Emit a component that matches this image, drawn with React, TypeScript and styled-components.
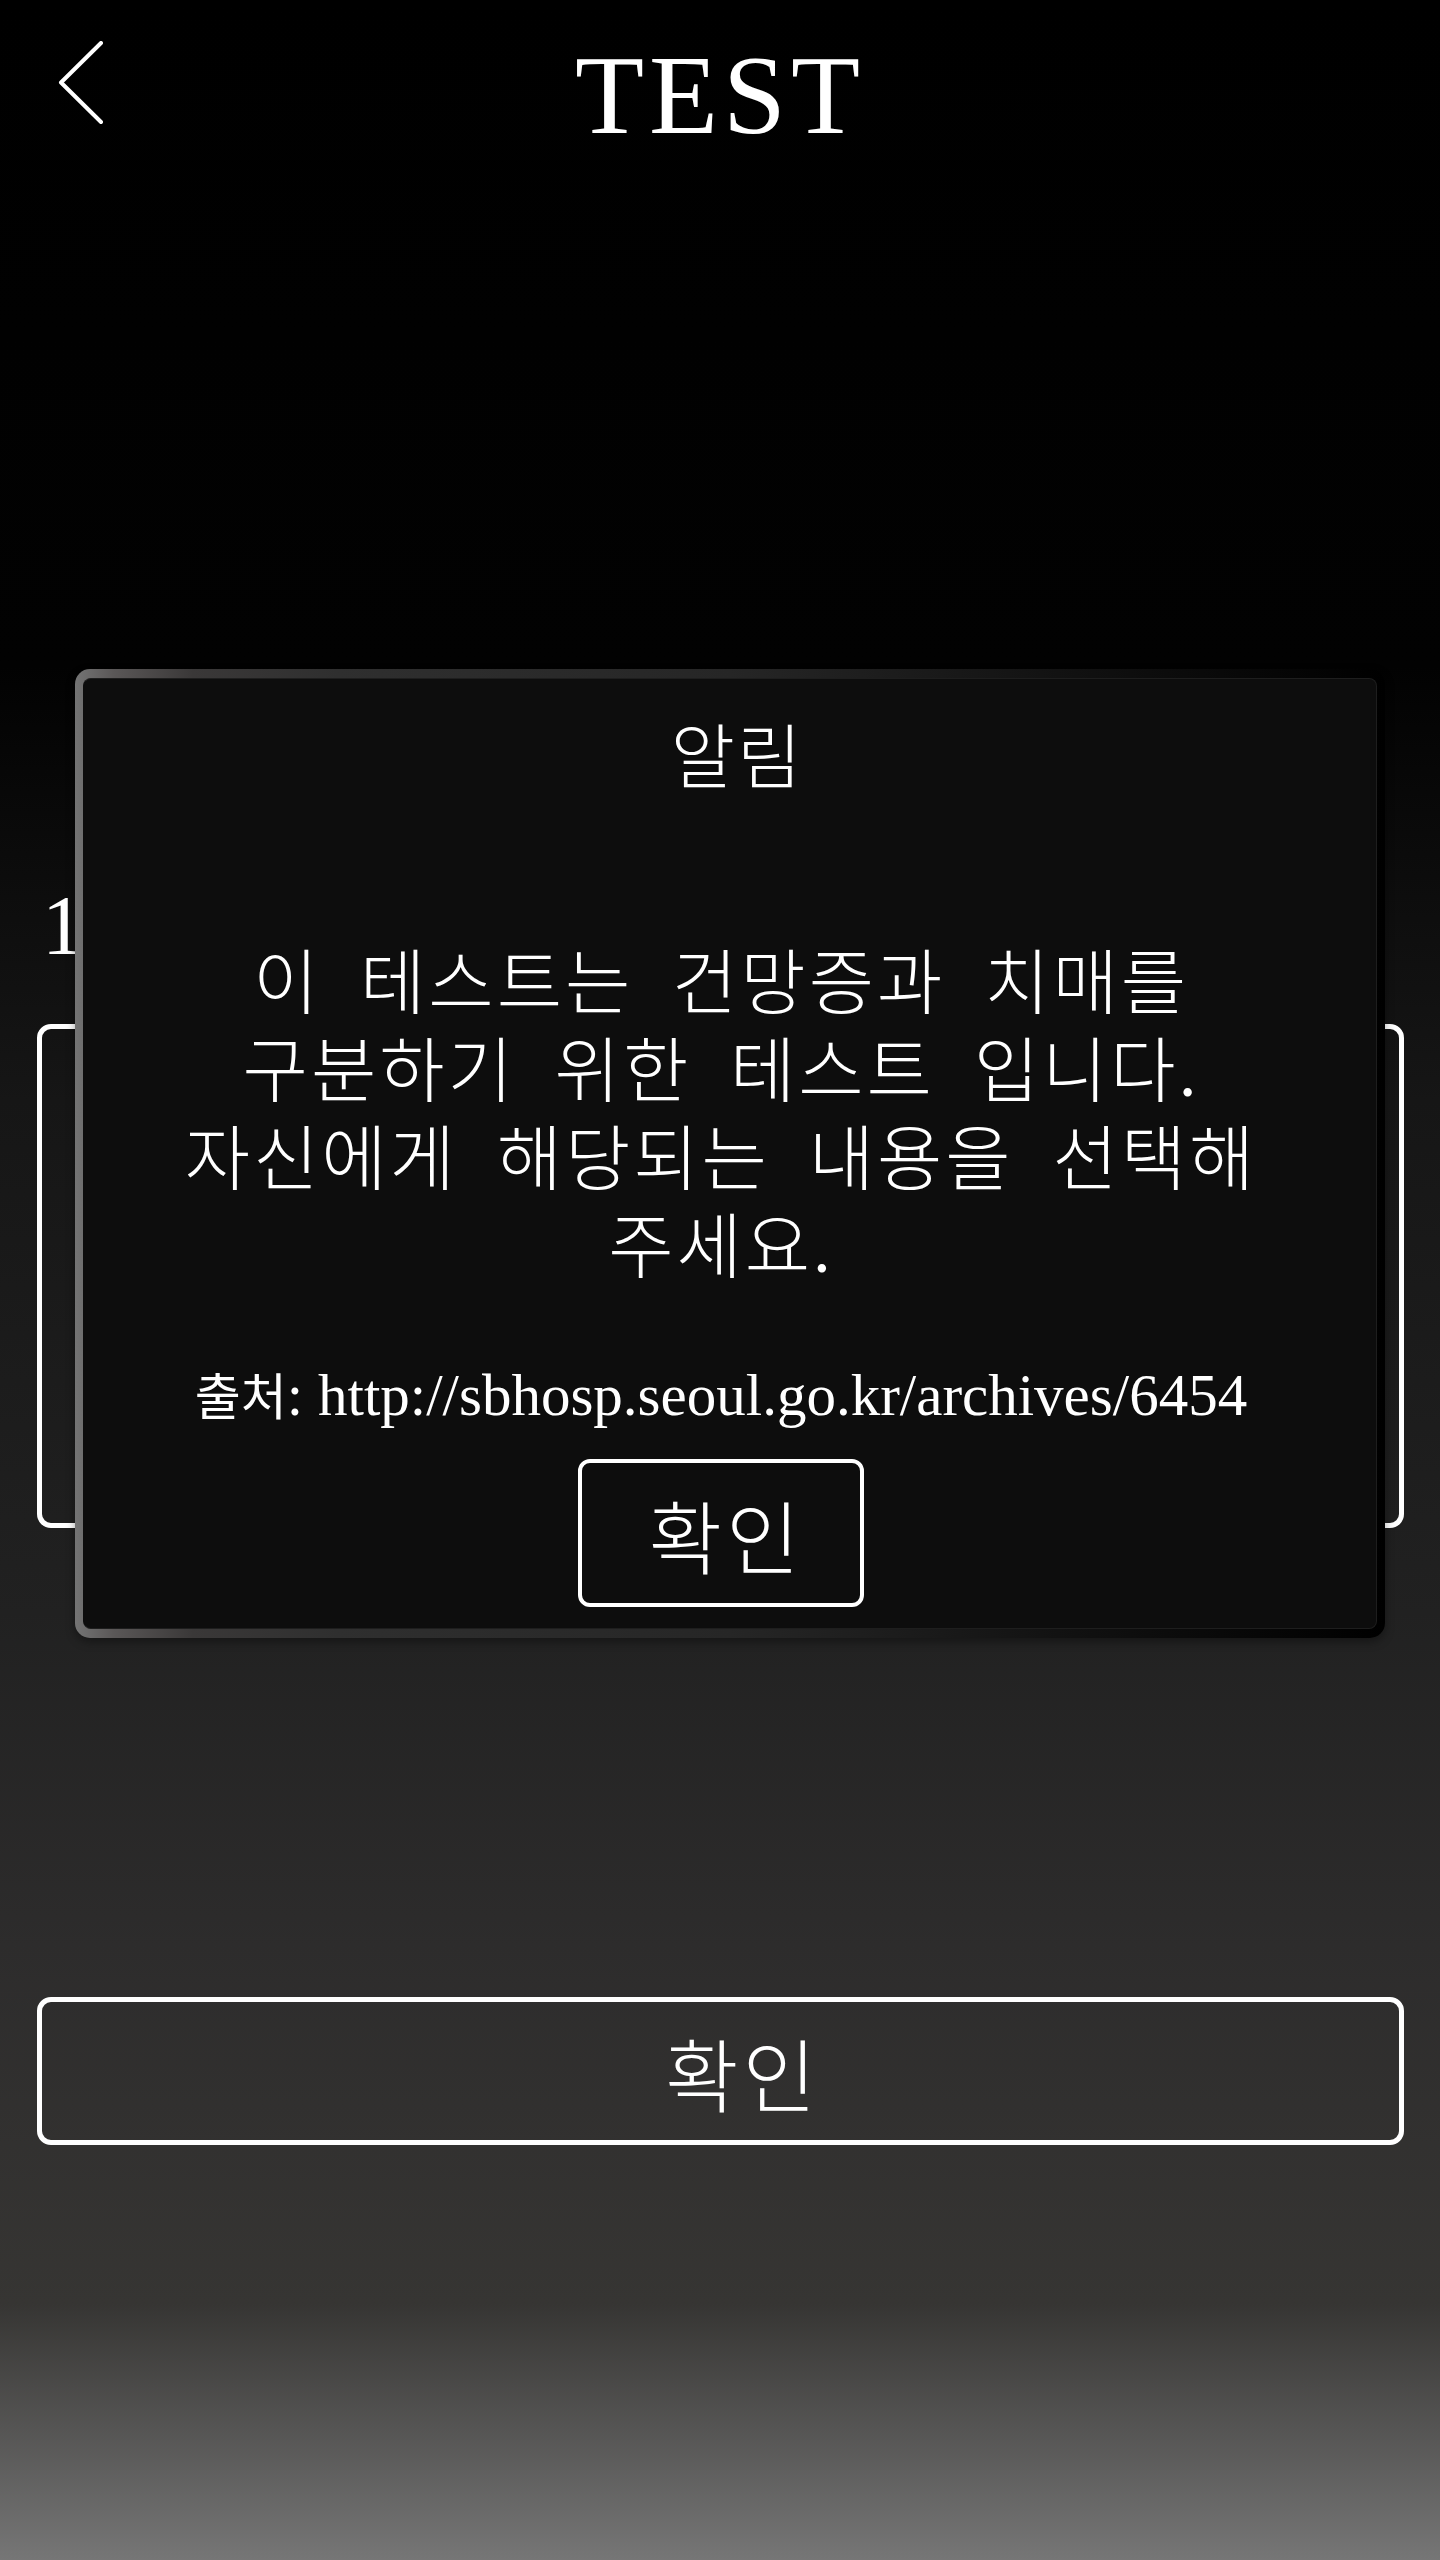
import React from "react";
import styled, { createGlobalStyle } from "styled-components";

const GlobalStyle = createGlobalStyle`
  html, body {
    margin: 0;
    padding: 0;
  }
  body {
    background: #000;
    font-family: "Liberation Serif", "Noto Sans CJK KR", serif;
    color: #fff;
  }
  * { box-sizing: border-box; }
`;

const Page = styled.div`
  position: relative;
  width: 1440px;
  min-height: 2560px;
  display: flex;
  flex-direction: column;
  background: linear-gradient(
    180deg,
    #000000 0%,
    #020202 26%,
    #0d0d0d 35%,
    #161616 43%,
    #212121 63%,
    #2d2c2c 76%,
    #363533 90%,
    #767676 100%
  );
`;

const Header = styled.header`
  display: grid;
  grid-template-columns: 160px 1fr 160px;
  align-items: start;
  padding-top: 39px;
  height: 180px;
`;

const BackButton = styled.button`
  background: none;
  border: none;
  padding: 0;
  margin: 2px 0 0 58px;
  width: 48px;
  height: 84px;
  cursor: pointer;
  display: block;
`;

const Title = styled.h1`
  margin: 0;
  text-align: center;
  font-family: "Liberation Serif", serif;
  font-weight: 400;
  font-size: 113px;
  line-height: 112px;
  letter-spacing: 5px;
  color: #fff;
`;

const Main = styled.main`
  display: flex;
  flex-direction: column;
  padding: 0 36px 0 37px;
  margin-top: 696px;
`;

const QuestionNumber = styled.div`
  font-family: "Liberation Serif", "Noto Sans CJK KR", serif;
  font-size: 84px;
  line-height: 100px;
  padding-left: 5px;
  color: #fff;
`;

const AnswerBox = styled.div`
  margin-top: 48px;
  height: 504px;
  border: 5px solid #fff;
  border-radius: 14px;
`;

const PrimaryButton = styled.button`
  margin-top: 469px;
  height: 148px;
  width: 100%;
  background: transparent;
  border: 5px solid #fff;
  border-radius: 14px;
  color: #fff;
  font-family: "Liberation Serif", "Noto Sans CJK KR", serif;
  font-weight: 300;
  font-size: 80px;
  letter-spacing: 4px;
  padding: 0 0 0 44px;
  cursor: pointer;
`;

const ModalFrame = styled.div`
  position: absolute;
  top: 669px;
  left: 75px;
  width: 1310px;
  padding: 9px 8px;
  border-radius: 15px;
  background: linear-gradient(
    90deg,
    #747474 0%,
    #5a5757 3%,
    #3a3838 9%,
    #2f2f2f 20%,
    #262626 50%,
    #121212 75%,
    #000000 100%
  );
  box-shadow: 0 4px 10px rgba(0, 0, 0, 0.35);
`;

const ModalPanel = styled.div`
  background: #0d0d0d;
  border-radius: 8px;
  border: 1px solid #1e1e1e;
  border-left-color: #0d0d0d;
  display: flex;
  flex-direction: column;
  align-items: center;
  padding: 41px 18px 21px 0;
  text-align: center;
  font-family: "Liberation Serif", "Noto Sans CJK KR", serif;
  font-weight: 300;
  color: #fff;
`;

const ModalTitle = styled.h2`
  margin: 0;
  font-weight: 300;
  font-size: 70px;
  line-height: 80px;
  letter-spacing: 2px;
  padding-left: 32px;
`;

const ModalBody = styled.p`
  margin: 140px 0 0;
  font-size: 71px;
  line-height: 88px;
  letter-spacing: 3px;
  word-spacing: 18px;
  font-weight: 300;
`;

const Source = styled.p`
  margin: 68px 0 0;
  font-family: "Liberation Serif", "Noto Sans CJK KR", serif;
  font-size: 59px;
  line-height: 70px;
  font-weight: 400;
`;

const SourceLabel = styled.span`
  font-size: 50px;
`;

const ModalButton = styled.button`
  margin-top: 26px;
  width: 286px;
  height: 148px;
  background: transparent;
  border: 4px solid #fff;
  border-radius: 12px;
  color: #fff;
  font-family: "Liberation Serif", "Noto Sans CJK KR", serif;
  font-weight: 300;
  font-size: 80px;
  letter-spacing: 4px;
  padding: 0 0 0 10px;
  cursor: pointer;
`;

const ChevronLeft = () => (
  <svg width="48" height="84" viewBox="0 0 48 84" fill="none">
    <polyline
      points="43,2 3,41.5 43,81"
      stroke="#fff"
      strokeWidth="4"
      strokeLinecap="round"
      strokeLinejoin="round"
    />
  </svg>
);

export default function App() {
  return (
    <>
      <GlobalStyle />
      <Page>
        <Header>
          <BackButton aria-label="뒤로">
            <ChevronLeft />
          </BackButton>
          <Title>TEST</Title>
          <div />
        </Header>
        <Main>
          <QuestionNumber>1.</QuestionNumber>
          <AnswerBox />
          <PrimaryButton>확인</PrimaryButton>
        </Main>
        <ModalFrame>
          <ModalPanel>
            <ModalTitle>알림</ModalTitle>
            <ModalBody>
              이 테스트는 건망증과 치매를
              <br />
              구분하기 위한 테스트 입니다.
              <br />
              자신에게 해당되는 내용을 선택해
              <br />
              주세요.
            </ModalBody>
            <Source>
              <SourceLabel>출처</SourceLabel>: http://sbhosp.seoul.go.kr/archives/6454
            </Source>
            <ModalButton>확인</ModalButton>
          </ModalPanel>
        </ModalFrame>
      </Page>
    </>
  );
}
